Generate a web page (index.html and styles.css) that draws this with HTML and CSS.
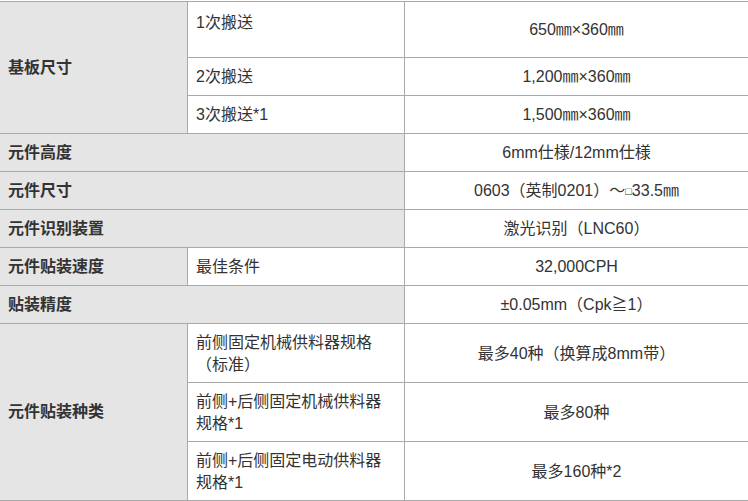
FILE: index.html
```html
<!DOCTYPE html>
<html lang="zh-CN">
<head>
<meta charset="utf-8">
<title>规格</title>
<link rel="stylesheet" href="styles.css">
</head>
<body>
<div class="spec">
  <div class="cell head r1-3">基板尺寸</div>
  <div class="cell sub top">1次搬送</div>
  <div class="cell val">650㎜×360㎜</div>
  <div class="cell sub">2次搬送</div>
  <div class="cell val">1,200㎜×360㎜</div>
  <div class="cell sub">3次搬送*1</div>
  <div class="cell val">1,500㎜×360㎜</div>

  <div class="cell head wide">元件高度</div>
  <div class="cell val">6mm仕様/12mm仕様</div>

  <div class="cell head wide">元件尺寸</div>
  <div class="cell val">0603（英制0201）～<span class="sq">□</span>33.5㎜</div>

  <div class="cell head wide">元件识别装置</div>
  <div class="cell val">激光识别（LNC60）</div>

  <div class="cell head">元件贴装速度</div>
  <div class="cell sub">最佳条件</div>
  <div class="cell val">32,000CPH</div>

  <div class="cell head wide">贴装精度</div>
  <div class="cell val">±0.05mm（Cpk≧1）</div>

  <div class="cell head r9-11">元件贴装种类</div>
  <div class="cell sub multi">前侧固定机械供料器规格（标准）</div>
  <div class="cell val">最多40种（换算成8mm带）</div>
  <div class="cell sub multi">前侧+后侧固定机械供料器规格*1</div>
  <div class="cell val">最多80种</div>
  <div class="cell sub multi">前侧+后侧固定电动供料器规格*1</div>
  <div class="cell val">最多160种*2</div>
</div>
</body>
</html>
```

FILE: styles.css
```css
html, body {
  margin: 0;
  padding: 0;
  background: #ffffff;
  overflow: hidden;
}

body {
  font-family: "Liberation Sans", "Noto Sans CJK SC", sans-serif;
  font-size: 16px;
  color: #333333;
}

.spec {
  margin-top: 1px;
  padding: 1px 0;
  width: 748px;
  background: #a9a9a9;
  display: grid;
  grid-template-columns: 187px 216px 343px;
  grid-template-rows: 55px 37px 37px 37px 37px 37px 37px 37px 58px 58px 58px;
  column-gap: 1px;
  row-gap: 1px;
}

.cell {
  background: #ffffff;
  display: flex;
  align-items: center;
  line-height: 22px;
  box-sizing: border-box;
}

.head {
  background: #e5e5e5;
  font-weight: bold;
  padding-left: 8px;
}

.wide {
  grid-column: 1 / span 2;
}

.r1-3 {
  grid-row: 1 / span 3;
}

.r9-11 {
  grid-row: 9 / span 3;
}

.sub {
  padding: 1px 8px 0 8px;
}

.sub.top {
  align-items: flex-start;
  padding-top: 10px;
}

.sub.multi {
  align-items: flex-start;
  padding-top: 8px;
}

.val {
  justify-content: center;
  text-align: center;
  padding-top: 1px;
}

.sq {
  font-family: "Liberation Sans", sans-serif;
  font-size: 11px;
}
```
